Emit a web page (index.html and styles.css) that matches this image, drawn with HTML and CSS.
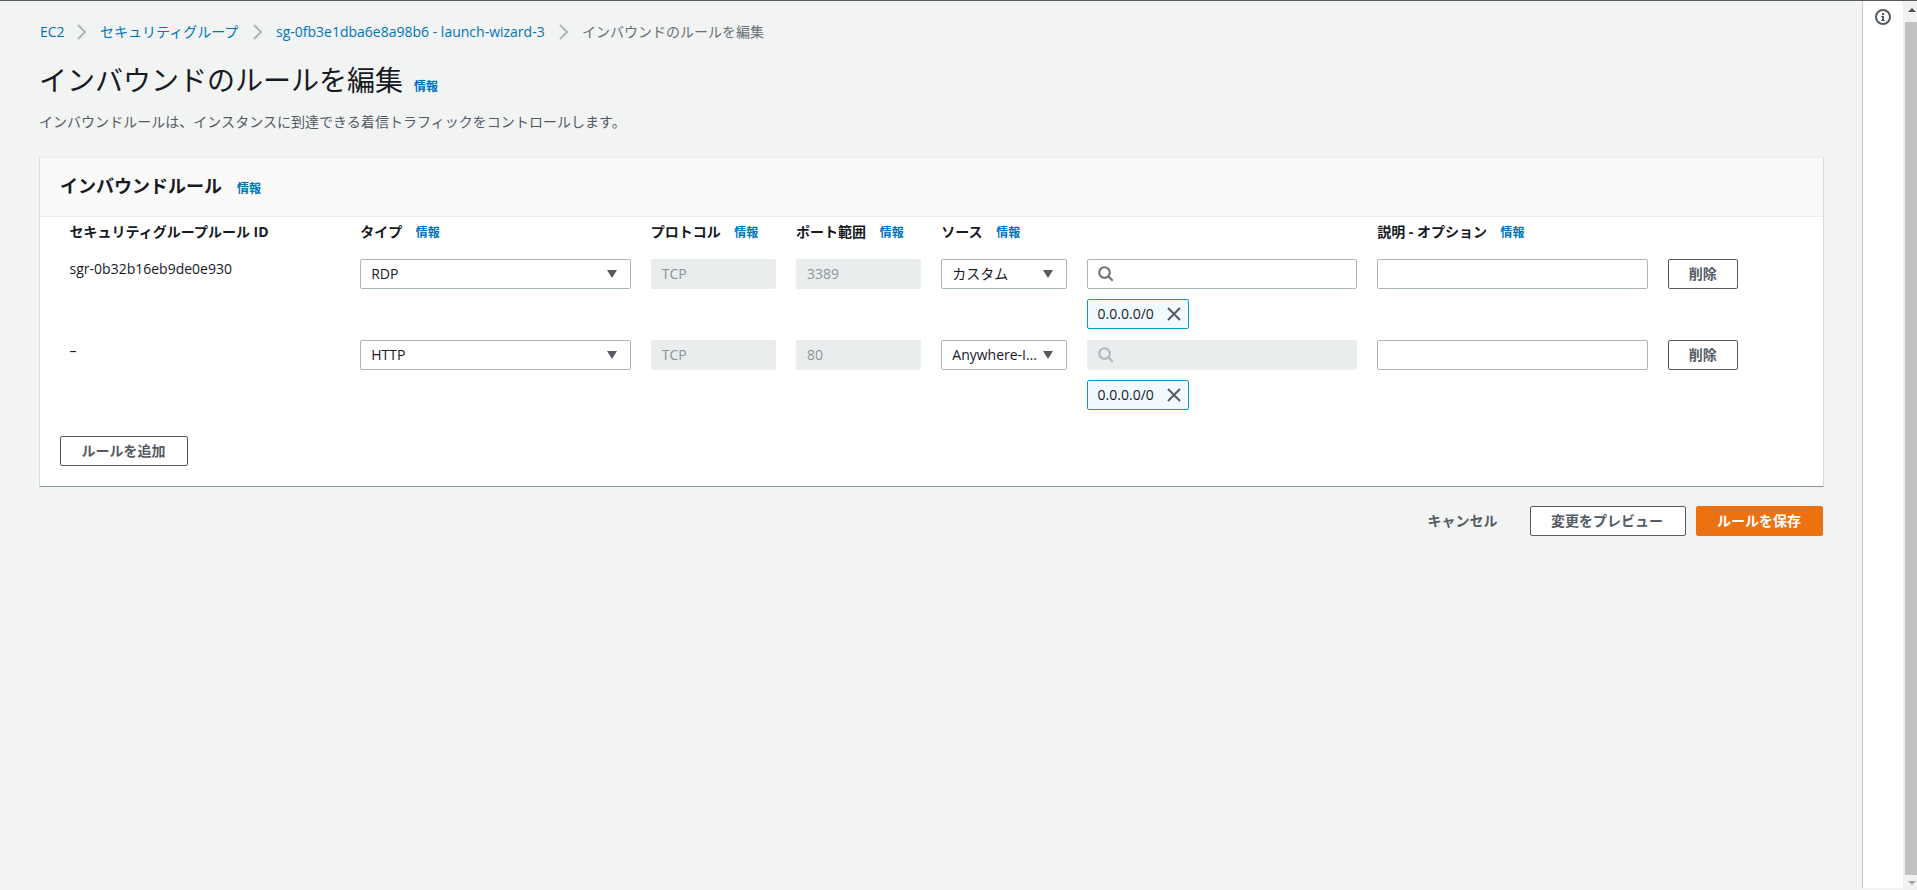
FILE: index.html
```html
<!DOCTYPE html>
<html lang="ja">
<head>
    <meta charset="UTF-8">
    <meta name="viewport" content="width=device-width, initial-scale=1.0">
    <title>インバウンドのルールを編集</title>
    <link rel="stylesheet" href="styles.css">
</head>
<body>
    <svg class="sprite" width="0" height="0">
        <symbol id="chevron" viewBox="0 0 10 16"><path d="M1 1l7 7-7 7" fill="none" stroke="#aab7b8" stroke-width="2"/></symbol>
        <symbol id="search" viewBox="0 0 16 16"><circle cx="6.5" cy="6.5" r="5.3" fill="none" stroke="currentColor" stroke-width="2"/><path d="M10.3 10.3l4.4 4.4" fill="none" stroke="currentColor" stroke-width="2"/></symbol>
        <symbol id="close" viewBox="0 0 14 14"><path d="M1 1l12 12M13 1L1 13" fill="none" stroke="currentColor" stroke-width="2"/></symbol>
    </svg>
    <div class="container">
        <main class="content">
            <nav class="breadcrumb">
                <a class="link crumb1">EC2</a>
                <svg class="chevron"><use href="#chevron"/></svg>
                <a class="link crumb2">セキュリティグループ</a>
                <svg class="chevron"><use href="#chevron"/></svg>
                <a class="link crumb3">sg-0fb3e1dba6e8a98b6 - launch-wizard-3</a>
                <svg class="chevron"><use href="#chevron"/></svg>
                <span class="current">インバウンドのルールを編集</span>
            </nav>
            <div class="heading">
                <h1>インバウンドのルールを編集</h1>
                <a class="info">情報</a>
            </div>
            <p class="description">インバウンドルールは、インスタンスに到達できる着信トラフィックをコントロールします。</p>

            <section class="card">
                <div class="cardHeader">
                    <h2>インバウンドルール</h2>
                    <a class="info">情報</a>
                </div>
                <div class="row labels">
                    <div class="wide">セキュリティグループルール ID</div>
                    <div class="wide">タイプ <a class="info">情報</a></div>
                    <div>プロトコル <a class="info">情報</a></div>
                    <div>ポート範囲 <a class="info">情報</a></div>
                    <div class="source">ソース <a class="info">情報</a></div>
                    <div class="wide">説明 - オプション <a class="info">情報</a></div>
                </div>
                <div class="row rule">
                    <div class="wide ruleId">sgr-0b32b16eb9de0e930</div>
                    <div class="wide field select"><span>RDP</span><i class="arrow"></i></div>
                    <div class="field disabled">TCP</div>
                    <div class="field disabled">3389</div>
                    <div class="field select"><span>カスタム</span><i class="arrow"></i></div>
                    <div class="wide">
                        <div class="field"><svg class="search"><use href="#search"/></svg></div>
                        <div class="token"><span>0.0.0.0/0</span><svg class="close"><use href="#close"/></svg></div>
                    </div>
                    <div class="wide field"></div>
                    <button class="button deleteButton">削除</button>
                </div>
                <div class="row rule">
                    <div class="wide ruleId empty">–</div>
                    <div class="wide field select"><span>HTTP</span><i class="arrow"></i></div>
                    <div class="field disabled">TCP</div>
                    <div class="field disabled">80</div>
                    <div class="field select"><span class="anywhere">Anywhere-I…</span><i class="arrow"></i></div>
                    <div class="wide">
                        <div class="field disabled"><svg class="search"><use href="#search"/></svg></div>
                        <div class="token"><span>0.0.0.0/0</span><svg class="close"><use href="#close"/></svg></div>
                    </div>
                    <div class="wide field"></div>
                    <button class="button deleteButton">削除</button>
                </div>
                <button class="button addButton">ルールを追加</button>
            </section>

            <div class="actions">
                <button class="button cancelButton">キャンセル</button>
                <button class="button previewButton">変更をプレビュー</button>
                <button class="button saveButton">ルールを保存</button>
            </div>
        </main>
        <aside class="tools">
            <svg width="16" height="16" viewBox="0 0 16 16">
                <circle cx="8" cy="8" r="7" fill="none" stroke="#545b64" stroke-width="2"/>
                <path d="M7 4h2v2H7zM6 7h3v4h1v1H6v-1h1V8H6z" fill="#545b64"/>
            </svg>
        </aside>
        <div class="scrollbar">
            <i class="up"></i>
            <div class="thumb"></div>
            <i class="down"></i>
        </div>
    </div>
</body>
</html>
```

FILE: styles.css
```css
* {
    box-sizing: border-box;
}
body {
    margin: 0;
    height: 890px;
    overflow: hidden;
    background-color: #f2f3f3;
    color: #16191f;
    font-family: "Open Sans", "Noto Sans CJK JP", sans-serif;
    font-size: 14px;
    line-height: 22px;
}
h1, h2, p {
    margin: 0;
}
.sprite {
    display: block;
}
.container {
    display: flex;
    height: 890px;
    border-top: 1px solid #545b64;
}
.content {
    width: 1862px;
    padding: 20px 38px 0 39px;
}
.link {
    color: #0073bb;
}
.info {
    color: #0073bb;
    font-size: 12px;
    font-weight: bold;
}

/* breadcrumb and page title */
.breadcrumb {
    display: flex;
    align-items: center;
    height: 22px;
    padding-left: 1px;
    white-space: nowrap;
}
.crumb1 {
    width: 24px;
}
.crumb2 {
    width: 140px;
}
.crumb3 {
    width: 270px;
}
.chevron {
    width: 10px;
    height: 16px;
    margin: 0 13px;
}
.current {
    color: #687078;
}
.heading {
    display: flex;
    align-items: baseline;
    height: 36px;
    margin-top: 19px;
}
h1 {
    font-size: 28px;
    font-weight: normal;
    line-height: 36px;
}
.heading .info {
    margin-left: 11px;
}
.description {
    margin-top: 13px;
    color: #545b64;
    letter-spacing: 0.03px;
}

/* rules card */
.card {
    height: 330px;
    margin-top: 24px;
    background-color: white;
    border: 1px solid #d5dbdb;
    border-top-color: #eaeded;
    border-bottom-color: #879596;
}
.cardHeader {
    display: flex;
    align-items: baseline;
    height: 59px;
    padding: 17px 20px 0;
    background-color: #fafafa;
    border-bottom: 1px solid #eaeded;
}
h2 {
    font-size: 18px;
    line-height: 22px;
}
.cardHeader .info {
    margin-left: 15px;
}
.row {
    display: grid;
    grid-template-columns: repeat(12, minmax(0, 1fr));
    column-gap: 20px;
    align-items: start;
    padding: 0 30px 0 29.6px;
}
.wide {
    grid-column: span 2;
}
.source {
    grid-column: span 3;
}
.labels {
    height: 42px;
    padding-top: 4px;
    font-weight: bold;
    white-space: nowrap;
}
.labels .info {
    margin-left: 10px;
}
.rule {
    height: 81px;
}
.ruleId {
    margin-top: -1px;
}
.empty {
    margin-top: 0;
}
.field {
    display: flex;
    align-items: center;
    height: 30px;
    padding: 0 10px;
    background-color: white;
    border: 1px solid #aab7b8;
    border-radius: 2px;
    white-space: nowrap;
}
.select {
    justify-content: space-between;
    padding-right: 13px;
}
.disabled {
    background-color: #eaeded;
    border-color: #eaeded;
    color: #879596;
}
.anywhere {
    width: 87px;
}
.arrow {
    flex: none;
    border: 5px solid transparent;
    border-top: 8px solid #545b64;
    border-bottom: 0;
}
.search {
    width: 16px;
    height: 16px;
    color: #687078;
}
.disabled .search {
    color: #aab7b8;
}
.token {
    display: flex;
    justify-content: space-between;
    align-items: center;
    width: 102px;
    height: 30px;
    margin-top: 10px;
    padding: 0 7px 0 10px;
    background-color: #f1faff;
    border: 1px solid #00a1c9;
    border-radius: 2px;
}
.close {
    width: 14px;
    height: 14px;
    color: #545b64;
}

/* buttons */
.button {
    height: 30px;
    padding: 0;
    background-color: white;
    border: 1px solid #545b64;
    border-radius: 2px;
    color: #545b64;
    font-family: inherit;
    font-size: 14px;
    font-weight: bold;
    line-height: 22px;
}
.deleteButton {
    width: 70px;
}
.addButton {
    display: block;
    width: 128px;
    margin: 15px 0 0 20px;
    padding-right: 1px;
}
.actions {
    display: flex;
    justify-content: flex-end;
    margin-top: 19px;
    padding-right: 1px;
}
.cancelButton {
    width: 113px;
    margin-right: 10px;
    padding-right: 2px;
    background-color: transparent;
    border-color: transparent;
}
.previewButton {
    width: 156px;
    margin-right: 10px;
    padding-right: 2px;
}
.saveButton {
    width: 127px;
    padding-right: 1px;
    background-color: #ec7211;
    border-color: #ec7211;
    color: white;
}

/* right help panel and scrollbar */
.tools {
    width: 41px;
    height: 887px;
    padding: 8px 0 0 12px;
    background-color: white;
    border-left: 1px solid #c6cccc;
}
.scrollbar {
    display: flex;
    flex-direction: column;
    width: 14px;
    padding-left: 2px;
    background-color: #f1f1f1;
}
.thumb {
    height: 853px;
    margin: 10px 0 6px;
    background-color: #c1c1c1;
}
.up, .down {
    width: 8px;
    margin-left: 3px;
    border: 4px solid transparent;
}
.up {
    margin-top: 7px;
    border-top: 0;
    border-bottom-color: #505050;
}
.down {
    border-top-color: #a3a3a3;
    border-bottom: 0;
}
```
